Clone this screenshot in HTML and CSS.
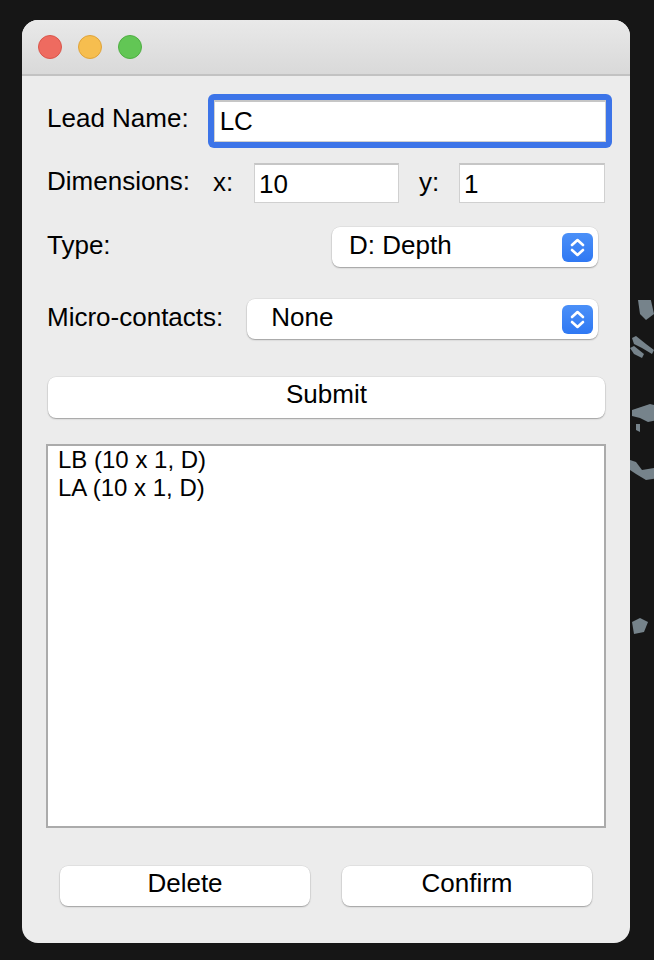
FILE: index.html
```html
<!DOCTYPE html>
<html lang="en">
<head>
<meta charset="utf-8">
<title>Lead Entry</title>
<link rel="stylesheet" href="styles.css">
</head>
<body>
<svg class="backdrop" width="30" height="340" viewBox="0 0 30 340" aria-hidden="true">
  <g fill="#76838b">
    <path d="M10 0 L22 -4 L26 14 L18 20 L12 14 Z"/>
    <path d="M4 38 L8 36 L18 44 L26 50 L24 54 L14 48 L6 44 Z"/>
    <path d="M2 48 L6 46 L16 54 L14 58 L6 54 Z"/>
    <path d="M4 110 L22 104 L30 106 L30 120 L20 122 L12 118 L4 116 Z"/>
    <path d="M8 124 L12 124 L12 132 L8 130 Z"/>
    <path d="M2 160 L8 162 L14 170 L26 168 L30 170 L30 178 L18 180 L8 174 L2 170 Z"/>
    <path d="M4 322 L12 318 L20 322 L16 332 L6 334 Z"/>
  </g>
</svg>
<div class="window">
  <div class="titlebar">
    <span class="light red"></span>
    <span class="light yellow"></span>
    <span class="light green"></span>
  </div>
  <div class="content">
    <div class="row row-name">
      <span class="label label-name">Lead Name:</span>
      <div class="focus-ring"><div class="field field-name">LC</div></div>
    </div>
    <div class="row row-dims">
      <span class="label label-dims">Dimensions:</span>
      <span class="axis axis-x">x:</span>
      <div class="field field-x">10</div>
      <span class="axis axis-y">y:</span>
      <div class="field field-y">1</div>
    </div>
    <div class="row row-type">
      <span class="label">Type:</span>
      <div class="popup popup-type">
        <span class="popup-text">D: Depth</span>
        <span class="stepper">
          <svg width="31" height="29" viewBox="0 0 31 29"><path d="M10 12 L15.5 7 L21 12 M10 17 L15.5 22 L21 17" fill="none" stroke="#fff" stroke-width="2.6" stroke-linecap="round" stroke-linejoin="round"/></svg>
        </span>
      </div>
    </div>
    <div class="row row-micro">
      <span class="label">Micro-contacts:</span>
      <div class="popup popup-micro">
        <span class="popup-text">None</span>
        <span class="stepper">
          <svg width="31" height="29" viewBox="0 0 31 29"><path d="M10 12 L15.5 7 L21 12 M10 17 L15.5 22 L21 17" fill="none" stroke="#fff" stroke-width="2.6" stroke-linecap="round" stroke-linejoin="round"/></svg>
        </span>
      </div>
    </div>
    <div class="button submit">Submit</div>
    <div class="listbox">
      <div class="list-item">LB (10 x 1, D)</div>
      <div class="list-item">LA (10 x 1, D)</div>
    </div>
    <div class="actions">
      <div class="button action">Delete</div>
      <div class="button action">Confirm</div>
    </div>
  </div>
</div>
</body>
</html>
```
FILE: styles.css
```css
html, body {
  margin: 0;
  padding: 0;
}
body {
  background: #161616;
  width: 654px;
  height: 960px;
  position: relative;
  overflow: hidden;
  font-family: "Liberation Sans", Arial, Helvetica, sans-serif;
  color: #000;
}
.backdrop {
  position: absolute;
  left: 628px;
  top: 300px;
}
.window {
  position: relative;
  margin: 20px 0 0 22px;
  width: 608px;
  height: 923px;
  background: #ececec;
  border-radius: 16px;
  overflow: hidden;
  display: flex;
  flex-direction: column;
}
.titlebar {
  height: 56px;
  flex: none;
  box-sizing: border-box;
  border-bottom: 2px solid #c2c2c2;
  background: linear-gradient(#e9e9e9, #d9d9d9);
  display: flex;
  align-items: center;
  gap: 16px;
  padding-left: 16px;
}
.light {
  width: 24px;
  height: 24px;
  border-radius: 50%;
  box-sizing: border-box;
}
.red { background: #ee6b60; border: 1px solid #d9564b; }
.yellow { background: #f6be4f; border: 1px solid #dfa33a; }
.green { background: #62c655; border: 1px solid #4fae43; }

.content {
  padding: 0 25px;
  display: flex;
  flex-direction: column;
  font-size: 26px;
}
.row {
  display: flex;
  align-items: center;
}
.label {
  white-space: nowrap;
  margin-bottom: 3px;
}
.label-name {
  margin-bottom: 5px;
}
.row-name {
  margin-top: 18px;
}
.focus-ring {
  flex: 1;
  margin-left: 19px;
  margin-right: -7px;
  background: #3c74e8;
  padding: 6px;
  border-radius: 6px;
}
.field {
  background: #fff;
  box-sizing: border-box;
  border: 1px solid #d0d0d0;
  border-top: 2px solid #c6c6c6;
  padding-left: 4px;
  line-height: 1;
  display: flex;
  align-items: center;
}
.field-name {
  height: 42px;
  padding-left: 5px;
  padding-bottom: 2px;
}
.row-dims {
  margin-top: 15px;
}
.label-dims {
  width: 166px;
}
.axis {
  display: inline-block;
  margin-bottom: 2px;
}
.axis-x {
  width: 41px;
}
.axis-y {
  width: 40px;
  padding-left: 20px;
}
.field-x {
  width: 145px;
  height: 40px;
}
.field-y {
  flex: 1;
  height: 40px;
}
.row-type {
  margin-top: 24px;
  justify-content: space-between;
}
.popup {
  background: #fff;
  height: 40px;
  border-radius: 8px;
  box-shadow: 0 1px 1.5px rgba(0, 0, 0, 0.3), 0 0 0 0.5px rgba(0, 0, 0, 0.08);
  display: flex;
  align-items: center;
  justify-content: space-between;
  box-sizing: border-box;
  padding-right: 5px;
  margin-right: 7px;
}
.popup-type {
  width: 266px;
  padding-left: 17px;
}
.row-micro {
  margin-top: 32px;
}
.popup-micro {
  flex: 1;
  margin-left: 24px;
  padding-left: 24px;
}
.popup-text {
  line-height: 1;
  margin-top: -4px;
}
.stepper {
  width: 31px;
  height: 29px;
  border-radius: 6px;
  background: linear-gradient(#4b90f8, #2f78f3);
  display: block;
  margin-top: 1px;
}
.stepper svg {
  display: block;
}
.button {
  background: #fff;
  border-radius: 8px;
  box-shadow: 0 1px 1.5px rgba(0, 0, 0, 0.3), 0 0 0 0.5px rgba(0, 0, 0, 0.08);
  display: flex;
  align-items: center;
  justify-content: center;
  line-height: 1;
  padding-bottom: 7px;
  box-sizing: border-box;
}
.submit {
  margin-top: 38px;
  margin-left: 1px;
  height: 41px;
}
.listbox {
  margin-top: 26px;
  margin-left: -1px;
  margin-right: -1px;
  height: 384px;
  box-sizing: border-box;
  border: 2px solid #ababab;
  background: #fff;
  padding: 0 10px;
  font-size: 24px;
  line-height: 28px;
}
.actions {
  margin-top: 38px;
  display: flex;
  justify-content: center;
  gap: 32px;
}
.action {
  width: 250px;
  height: 40px;
}
```
